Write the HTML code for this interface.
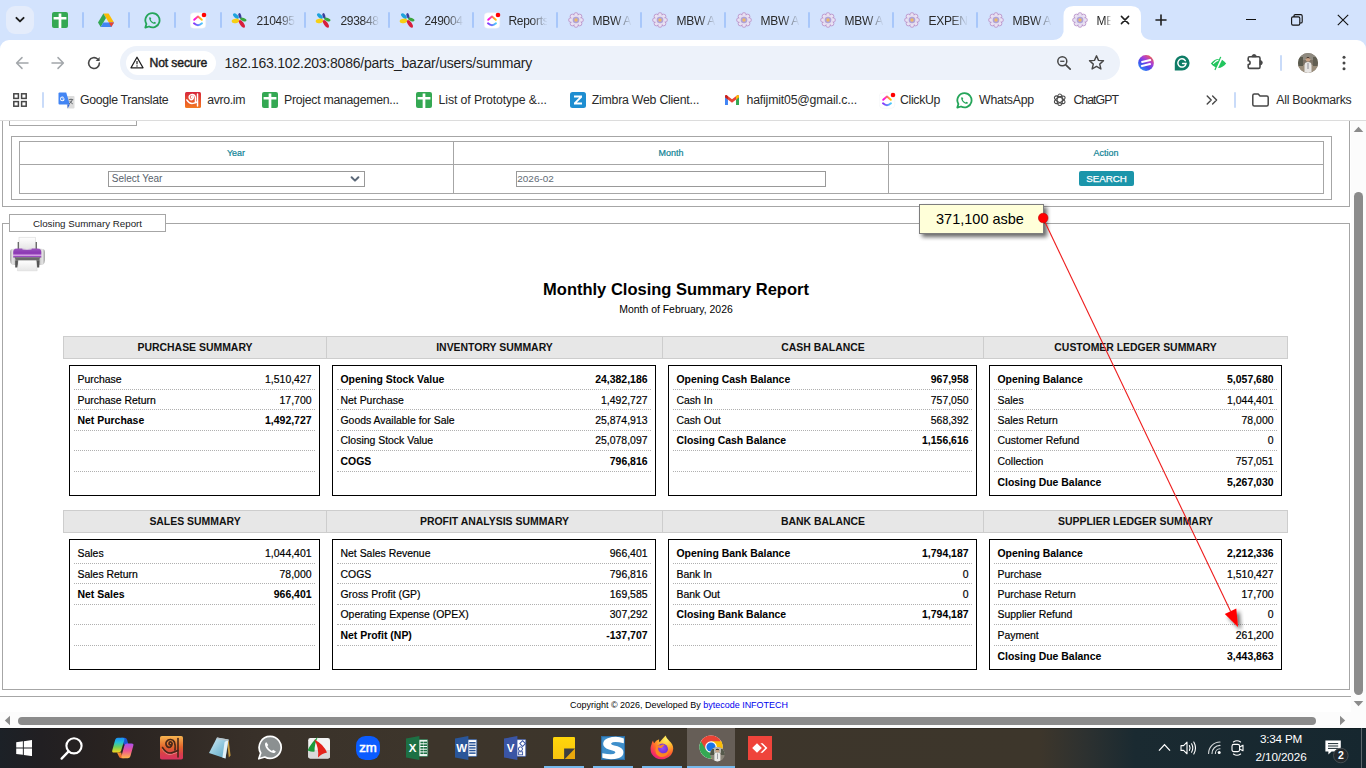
<!DOCTYPE html>
<html lang="en"><head><meta charset="utf-8"><title>Monthly Closing Summary Report</title>
<style>*{box-sizing:border-box;margin:0;padding:0}
html,body{width:1366px;height:768px;overflow:hidden;background:#fff;font-family:"Liberation Sans",sans-serif;color:#000}
.abs{position:absolute}
.ln{position:absolute;background:#a6a6a6}
.lg{position:absolute;border:1px solid #a6a6a6;background:#fff;font-size:9.78px;text-align:center;color:#222;white-space:nowrap}
.teal{position:absolute;color:#0e8295;-webkit-text-stroke:0.2px #0e8295;font-size:8.95px;line-height:12px;width:100px;text-align:center;white-space:nowrap}
.hd{position:absolute;background:#e7e7e7;border:1px solid #cdcdcd;font-weight:bold;font-size:10.45px;text-align:center;color:#111;white-space:nowrap}
.box{position:absolute;border:1px solid #000;background:#fff}
.row{position:absolute;height:1px;border-top:1px dotted #b0b0b0}
.t{position:absolute;font-size:10.45px;line-height:14px;white-space:nowrap;color:#000;-webkit-text-stroke:0.18px #000}
.t.r{text-align:right}
.b{font-weight:bold}

.t.b{-webkit-text-stroke:0.05px #000}
</style></head>
<body>
<div id="page" class="abs" style="left:0;top:120px;width:1351px;height:592px;background:#fff;overflow:hidden">
<div class="ln" style="left:2px;top:0px;width:1px;height:87px"></div>
<div class="ln" style="left:1349px;top:0px;width:1px;height:87px"></div>
<div class="ln" style="left:2px;top:86px;width:1348px;height:1px"></div>
<div class="lg" style="left:9px;top:-12px;width:128px;height:18px"></div>
<div class="abs" style="left:11px;top:16px;width:1321px;height:64px;border:1px solid #a6a6a6"></div>
<div class="abs" style="left:19px;top:21px;width:1305px;height:53px;border:1px solid #a6a6a6"></div>
<div class="ln" style="left:19px;top:44px;width:1305px;height:1px"></div>
<div class="ln" style="left:453px;top:21px;width:1px;height:53px"></div>
<div class="ln" style="left:888px;top:21px;width:1px;height:53px"></div>
<div class="teal" style="left:186px;top:26.5px">Year</div>
<div class="teal" style="left:621px;top:26.5px">Month</div>
<div class="teal" style="left:1056px;top:26.5px">Action</div>
<div class="abs" style="left:108px;top:51px;width:257px;height:16px;border:1px solid #999;background:#fff;font-size:10px;line-height:13.5px;color:#59626c;padding-left:2.8px">Select Year</div>
<svg class="abs" style="left:350px;top:55px" width="10" height="8" viewBox="0 0 10 8"><path d="M1.6 2.2 L5 5.6 L8.4 2.2" fill="none" stroke="#5b6878" stroke-width="2" stroke-linecap="round" stroke-linejoin="round"/></svg>
<div class="abs" style="left:516px;top:51px;width:310px;height:16px;border:1px solid #999;background:#fff;font-size:9.95px;line-height:13.5px;color:#626b76;padding-left:0.3px">2026-02</div>
<div class="abs" style="left:1079px;top:51px;width:55px;height:15px;border-radius:2px;background:#1b95aa;color:#fff;font-size:9.75px;line-height:15px;text-align:center;letter-spacing:0;-webkit-text-stroke:0.25px #fff">SEARCH</div>
<div class="ln" style="left:2px;top:103px;width:1348px;height:1px"></div>
<div class="ln" style="left:2px;top:103px;width:1px;height:467px"></div>
<div class="ln" style="left:1349px;top:103px;width:1px;height:467px"></div>
<div class="ln" style="left:2px;top:569px;width:1348px;height:1px"></div>
<div class="lg" style="left:9px;top:94px;width:157px;height:18px;line-height:17.5px">Closing Summary Report</div>
<svg class="abs" style="left:4px;top:112px" width="48" height="44" viewBox="0 0 48 44">
<defs><linearGradient id="pg" x1="0" y1="0" x2="0" y2="1"><stop offset="0" stop-color="#9a55bd"/><stop offset="0.55" stop-color="#8a35b3"/><stop offset="0.78" stop-color="#d6a3e6"/><stop offset="0.9" stop-color="#9c4cc0"/><stop offset="1" stop-color="#7b3a9c"/></linearGradient>
<linearGradient id="pg2" x1="0" y1="0" x2="1" y2="0"><stop offset="0" stop-color="#a2a2a2"/><stop offset="0.45" stop-color="#e6e6e6"/><stop offset="1" stop-color="#bdbdbd"/></linearGradient><linearGradient id="pg4" x1="1" y1="0" x2="0" y2="0"><stop offset="0" stop-color="#a2a2a2"/><stop offset="0.45" stop-color="#e6e6e6"/><stop offset="1" stop-color="#bdbdbd"/></linearGradient>
<linearGradient id="pg3" x1="0" y1="0" x2="0" y2="1"><stop offset="0" stop-color="#ffffff"/><stop offset="1" stop-color="#e6e6e6"/></linearGradient>
<filter id="pb" x="-10%" y="-10%" width="120%" height="120%"><feGaussianBlur stdDeviation="0.35"/></filter></defs>
<g filter="url(#pb)">
<rect x="13.7" y="10" width="1.6" height="7" fill="#4a4a4a"/><rect x="31.2" y="10" width="1.6" height="7" fill="#4a4a4a"/>
<rect x="15" y="5.2" width="16.3" height="11.6" fill="url(#pg3)" stroke="#cfcfcf" stroke-width="0.5"/>
<path d="M6 20 Q6 16.8 10 16.8 H12 V33 H8.4 Q6 31.5 6 28 Z" fill="url(#pg2)"/>
<path d="M41 20 Q41 16.8 37 16.8 H35 V33 H38.6 Q41 31.5 41 28 Z" fill="url(#pg4)"/>
<path d="M9.2 20 Q9.2 16.4 13 16.4 H33.5 Q37.3 16.4 37.3 20 V25.4 H9.2 Z" fill="url(#pg)"/>
<ellipse cx="23" cy="16.8" rx="5" ry="0.9" fill="#e9e9e9"/>
<path d="M10.8 25.2 H36 L35.2 28.8 H11.8 Z" fill="#6b6b6b"/>
<path d="M11.2 28.6 H14.4 L13.6 35.6 H11.2 Z M35.6 28.6 H32.2 L33 35.6 H35.2 Z" fill="#555"/>
<path d="M14.4 28.6 H32.2 L33.2 38.8 H13.4 Z" fill="url(#pg3)" stroke="#d0d0d0" stroke-width="0.4"/>
</g></svg>
<div class="abs" style="left:376px;top:159px;width:600px;text-align:center;font-weight:bold;font-size:16.5px;line-height:20px;color:#000;white-space:nowrap">Monthly Closing Summary Report</div>
<div class="abs" style="left:376px;top:183.3px;width:600px;text-align:center;font-size:10.45px;line-height:14px;color:#000;white-space:nowrap">Month of February, 2026</div>
<div class="hd" style="left:63px;top:216px;width:264px;height:23px;line-height:21px">PURCHASE SUMMARY</div>
<div class="box" style="left:69px;top:245px;width:251px;height:131px"></div>
<div class="row" style="left:73.5px;top:269px;width:241px"></div>
<div class="t" style="left:77.5px;top:253.25px">Purchase</div>
<div class="t r" style="left:191.5px;top:253.25px;width:120px">1,510,427</div>
<div class="row" style="left:73.5px;top:289px;width:241px"></div>
<div class="t" style="left:77.5px;top:274.25px">Purchase Return</div>
<div class="t r" style="left:191.5px;top:274.25px;width:120px">17,700</div>
<div class="row" style="left:73.5px;top:310px;width:241px"></div>
<div class="t b" style="left:77.5px;top:294.25px">Net Purchase</div>
<div class="t r b" style="left:191.5px;top:294.25px;width:120px">1,492,727</div>
<div class="row" style="left:73.5px;top:330px;width:241px"></div>
<div class="row" style="left:73.5px;top:351px;width:241px"></div>
<div class="hd" style="left:326px;top:216px;width:337px;height:23px;line-height:21px">INVENTORY SUMMARY</div>
<div class="box" style="left:332px;top:245px;width:324px;height:131px"></div>
<div class="row" style="left:336.5px;top:269px;width:314px"></div>
<div class="t b" style="left:340.5px;top:253.25px">Opening Stock Value</div>
<div class="t r b" style="left:527.5px;top:253.25px;width:120px">24,382,186</div>
<div class="row" style="left:336.5px;top:289px;width:314px"></div>
<div class="t" style="left:340.5px;top:274.25px">Net Purchase</div>
<div class="t r" style="left:527.5px;top:274.25px;width:120px">1,492,727</div>
<div class="row" style="left:336.5px;top:310px;width:314px"></div>
<div class="t" style="left:340.5px;top:294.25px">Goods Available for Sale</div>
<div class="t r" style="left:527.5px;top:294.25px;width:120px">25,874,913</div>
<div class="row" style="left:336.5px;top:330px;width:314px"></div>
<div class="t" style="left:340.5px;top:314.25px">Closing Stock Value</div>
<div class="t r" style="left:527.5px;top:314.25px;width:120px">25,078,097</div>
<div class="row" style="left:336.5px;top:351px;width:314px"></div>
<div class="t b" style="left:340.5px;top:335.25px">COGS</div>
<div class="t r b" style="left:527.5px;top:335.25px;width:120px">796,816</div>
<div class="hd" style="left:662px;top:216px;width:322px;height:23px;line-height:21px">CASH BALANCE</div>
<div class="box" style="left:668px;top:245px;width:309px;height:131px"></div>
<div class="row" style="left:672.5px;top:269px;width:299px"></div>
<div class="t b" style="left:676.5px;top:253.25px">Opening Cash Balance</div>
<div class="t r b" style="left:848.5px;top:253.25px;width:120px">967,958</div>
<div class="row" style="left:672.5px;top:289px;width:299px"></div>
<div class="t" style="left:676.5px;top:274.25px">Cash In</div>
<div class="t r" style="left:848.5px;top:274.25px;width:120px">757,050</div>
<div class="row" style="left:672.5px;top:310px;width:299px"></div>
<div class="t" style="left:676.5px;top:294.25px">Cash Out</div>
<div class="t r" style="left:848.5px;top:294.25px;width:120px">568,392</div>
<div class="row" style="left:672.5px;top:330px;width:299px"></div>
<div class="t b" style="left:676.5px;top:314.25px">Closing Cash Balance</div>
<div class="t r b" style="left:848.5px;top:314.25px;width:120px">1,156,616</div>
<div class="row" style="left:672.5px;top:351px;width:299px"></div>
<div class="hd" style="left:983px;top:216px;width:305px;height:23px;line-height:21px">CUSTOMER LEDGER SUMMARY</div>
<div class="box" style="left:989px;top:245px;width:293px;height:131px"></div>
<div class="row" style="left:993.5px;top:269px;width:283px"></div>
<div class="t b" style="left:997.5px;top:253.25px">Opening Balance</div>
<div class="t r b" style="left:1153.5px;top:253.25px;width:120px">5,057,680</div>
<div class="row" style="left:993.5px;top:289px;width:283px"></div>
<div class="t" style="left:997.5px;top:274.25px">Sales</div>
<div class="t r" style="left:1153.5px;top:274.25px;width:120px">1,044,401</div>
<div class="row" style="left:993.5px;top:310px;width:283px"></div>
<div class="t" style="left:997.5px;top:294.25px">Sales Return</div>
<div class="t r" style="left:1153.5px;top:294.25px;width:120px">78,000</div>
<div class="row" style="left:993.5px;top:330px;width:283px"></div>
<div class="t" style="left:997.5px;top:314.25px">Customer Refund</div>
<div class="t r" style="left:1153.5px;top:314.25px;width:120px">0</div>
<div class="row" style="left:993.5px;top:351px;width:283px"></div>
<div class="t" style="left:997.5px;top:335.25px">Collection</div>
<div class="t r" style="left:1153.5px;top:335.25px;width:120px">757,051</div>
<div class="t b" style="left:997.5px;top:356.25px">Closing Due Balance</div>
<div class="t r b" style="left:1153.5px;top:356.25px;width:120px">5,267,030</div>
<div class="hd" style="left:63px;top:390px;width:264px;height:23px;line-height:21px">SALES SUMMARY</div>
<div class="box" style="left:69px;top:419px;width:251px;height:131px"></div>
<div class="row" style="left:73.5px;top:443px;width:241px"></div>
<div class="t" style="left:77.5px;top:427.25px">Sales</div>
<div class="t r" style="left:191.5px;top:427.25px;width:120px">1,044,401</div>
<div class="row" style="left:73.5px;top:463px;width:241px"></div>
<div class="t" style="left:77.5px;top:448.25px">Sales Return</div>
<div class="t r" style="left:191.5px;top:448.25px;width:120px">78,000</div>
<div class="row" style="left:73.5px;top:484px;width:241px"></div>
<div class="t b" style="left:77.5px;top:468.25px">Net Sales</div>
<div class="t r b" style="left:191.5px;top:468.25px;width:120px">966,401</div>
<div class="row" style="left:73.5px;top:504px;width:241px"></div>
<div class="row" style="left:73.5px;top:525px;width:241px"></div>
<div class="hd" style="left:326px;top:390px;width:337px;height:23px;line-height:21px">PROFIT ANALYSIS SUMMARY</div>
<div class="box" style="left:332px;top:419px;width:324px;height:131px"></div>
<div class="row" style="left:336.5px;top:443px;width:314px"></div>
<div class="t" style="left:340.5px;top:427.25px">Net Sales Revenue</div>
<div class="t r" style="left:527.5px;top:427.25px;width:120px">966,401</div>
<div class="row" style="left:336.5px;top:463px;width:314px"></div>
<div class="t" style="left:340.5px;top:448.25px">COGS</div>
<div class="t r" style="left:527.5px;top:448.25px;width:120px">796,816</div>
<div class="row" style="left:336.5px;top:484px;width:314px"></div>
<div class="t" style="left:340.5px;top:468.25px">Gross Profit (GP)</div>
<div class="t r" style="left:527.5px;top:468.25px;width:120px">169,585</div>
<div class="row" style="left:336.5px;top:504px;width:314px"></div>
<div class="t" style="left:340.5px;top:488.25px">Operating Expense (OPEX)</div>
<div class="t r" style="left:527.5px;top:488.25px;width:120px">307,292</div>
<div class="row" style="left:336.5px;top:525px;width:314px"></div>
<div class="t b" style="left:340.5px;top:509.25px">Net Profit (NP)</div>
<div class="t r b" style="left:527.5px;top:509.25px;width:120px">-137,707</div>
<div class="hd" style="left:662px;top:390px;width:322px;height:23px;line-height:21px">BANK BALANCE</div>
<div class="box" style="left:668px;top:419px;width:309px;height:131px"></div>
<div class="row" style="left:672.5px;top:443px;width:299px"></div>
<div class="t b" style="left:676.5px;top:427.25px">Opening Bank Balance</div>
<div class="t r b" style="left:848.5px;top:427.25px;width:120px">1,794,187</div>
<div class="row" style="left:672.5px;top:463px;width:299px"></div>
<div class="t" style="left:676.5px;top:448.25px">Bank In</div>
<div class="t r" style="left:848.5px;top:448.25px;width:120px">0</div>
<div class="row" style="left:672.5px;top:484px;width:299px"></div>
<div class="t" style="left:676.5px;top:468.25px">Bank Out</div>
<div class="t r" style="left:848.5px;top:468.25px;width:120px">0</div>
<div class="row" style="left:672.5px;top:504px;width:299px"></div>
<div class="t b" style="left:676.5px;top:488.25px">Closing Bank Balance</div>
<div class="t r b" style="left:848.5px;top:488.25px;width:120px">1,794,187</div>
<div class="row" style="left:672.5px;top:525px;width:299px"></div>
<div class="hd" style="left:983px;top:390px;width:305px;height:23px;line-height:21px">SUPPLIER LEDGER SUMMARY</div>
<div class="box" style="left:989px;top:419px;width:293px;height:131px"></div>
<div class="row" style="left:993.5px;top:443px;width:283px"></div>
<div class="t b" style="left:997.5px;top:427.25px">Opening Balance</div>
<div class="t r b" style="left:1153.5px;top:427.25px;width:120px">2,212,336</div>
<div class="row" style="left:993.5px;top:463px;width:283px"></div>
<div class="t" style="left:997.5px;top:448.25px">Purchase</div>
<div class="t r" style="left:1153.5px;top:448.25px;width:120px">1,510,427</div>
<div class="row" style="left:993.5px;top:484px;width:283px"></div>
<div class="t" style="left:997.5px;top:468.25px">Purchase Return</div>
<div class="t r" style="left:1153.5px;top:468.25px;width:120px">17,700</div>
<div class="row" style="left:993.5px;top:504px;width:283px"></div>
<div class="t" style="left:997.5px;top:488.25px">Supplier Refund</div>
<div class="t r" style="left:1153.5px;top:488.25px;width:120px">0</div>
<div class="row" style="left:993.5px;top:525px;width:283px"></div>
<div class="t" style="left:997.5px;top:509.25px">Payment</div>
<div class="t r" style="left:1153.5px;top:509.25px;width:120px">261,200</div>
<div class="t b" style="left:997.5px;top:530.25px">Closing Due Balance</div>
<div class="t r b" style="left:1153.5px;top:530.25px;width:120px">3,443,863</div>
<div class="ln" style="left:0px;top:576px;width:1351px;height:1px"></div>
<div class="abs" style="left:379px;top:579px;width:600px;text-align:center;font-size:8.97px;line-height:12px;color:#000;white-space:nowrap">Copyright © 2026, Developed By <span style="color:#0000ee">bytecode INFOTECH</span></div>
</div>
<div class="abs" style="left:1351px;top:120px;width:15px;height:592px;background:#fcfcfc"></div>
<svg class="abs" style="left:1353px;top:126px" width="11" height="7" viewBox="0 0 11 7"><path d="M5.5 0.8 L10.3 6 H0.7 Z" fill="#8b8b8b"/></svg>
<svg class="abs" style="left:1353px;top:700px" width="11" height="7" viewBox="0 0 11 7"><path d="M5.5 6.2 L10.3 1 H0.7 Z" fill="#8b8b8b"/></svg>
<div class="abs" style="left:1354px;top:192px;width:9px;height:503px;border-radius:4.5px;background:#8b8b8b"></div>
<div class="abs" style="left:0;top:712px;width:1366px;height:16px;background:#fcfcfc"></div>
<svg class="abs" style="left:4px;top:715px" width="7" height="11" viewBox="0 0 7 11"><path d="M0.8 5.5 L6 0.7 V10.3 Z" fill="#8b8b8b"/></svg>
<svg class="abs" style="left:1339px;top:715px" width="7" height="11" viewBox="0 0 7 11"><path d="M6.2 5.5 L1 0.7 V10.3 Z" fill="#8b8b8b"/></svg>
<div class="abs" style="left:18px;top:716.5px;width:1298px;height:8.7px;border-radius:4.35px;background:#8b8b8b"></div>
<div id="tabstrip" class="abs" style="left:0;top:0;width:1366px;height:52px;background:#d3e3fd"></div>
<div class="abs" style="left:6px;top:6px;width:28px;height:28px;border-radius:9px;background:#e4ecfb"></div>
<svg class="abs" style="left:13px;top:14px" width="14" height="12" viewBox="0 0 14 12"><path d="M3.4 3.8 L7 7.4 L10.6 3.8" fill="none" stroke="#1f1f1f" stroke-width="1.9" stroke-linecap="round" stroke-linejoin="round"/></svg>
<svg class="abs" style="left:52px;top:12px" width="16" height="16" viewBox="0 0 16 16"><rect width="16" height="16" rx="2" fill="#34a853"/><path d="M1.6 4.9 H14.4 V7.6 H9.35 V16 H6.65 V7.6 H1.6 Z M6.65 1.6 H9.35 V4.9 H6.65 Z" fill="#fff"/></svg>
<svg class="abs" style="left:98px;top:12px" width="16" height="16" viewBox="0 0 16 16"><path d="M5.4 1.4 H10.6 L16 10.6 H10.8 Z" fill="#fbbc04"/><path d="M5.4 1.4 L8 5.9 L2.7 15 L0 10.6 Z" fill="#34a853"/><path d="M5.3 10.6 H16 L13.3 15 H2.7 Z" fill="#4285f4"/><path d="M10.8 10.6 H16 L13.3 15 Z" fill="#ea4335"/></svg>
<svg class="abs" style="left:143.5px;top:11.5px" width="17" height="17" viewBox="0 0 17 17"><path d="M8.6 1.2 A7.1 7.1 0 1 1 5 14.5 L1.3 15.6 L2.4 12 A7.1 7.1 0 0 1 8.6 1.2 Z" fill="none" stroke="#25a55a" stroke-width="1.8" stroke-linejoin="round"/><path d="M6.1 4.9 C5.6 4.9 5.2 5.6 5.2 6.4 C5.4 8.9 8 11.5 10.5 11.8 C11.4 11.8 12.1 11.3 12.1 10.8 L10.4 9.8 L9.6 10.5 C8.5 10.1 7 8.6 6.7 7.5 L7.3 6.7 Z" fill="#25a55a"/></svg>
<svg class="abs" style="left:190px;top:11.5px" width="17" height="17" viewBox="0 0 17 17"><defs><linearGradient id="cu0" x1="0" y1="0" x2="1" y2="0"><stop offset="0" stop-color="#8930fd"/><stop offset="1" stop-color="#49ccf9"/></linearGradient><linearGradient id="cv0" x1="0" y1="0" x2="1" y2="0"><stop offset="0" stop-color="#ff02f0"/><stop offset="1" stop-color="#ffc800"/></linearGradient></defs><rect x="0.25" y="0.75" width="15.5" height="15.5" rx="3.5" fill="#fff" stroke="#eef0f3" stroke-width="0.5"/><path d="M4 11.3 Q8 15 12 11.3" fill="none" stroke="url(#cu0)" stroke-width="1.9" stroke-linecap="round"/><path d="M4.2 7.8 L8 4.5 L11.8 7.8" fill="none" stroke="url(#cv0)" stroke-width="1.9" stroke-linecap="round" stroke-linejoin="round"/><circle cx="14" cy="3" r="2.3" fill="#ff0000"/></svg>
<div class="abs" style="left:81.8px;top:12px;width:2px;height:16px;background:#a8c7fa;border-radius:1px"></div>
<div class="abs" style="left:127.8px;top:12px;width:2px;height:16px;background:#a8c7fa;border-radius:1px"></div>
<div class="abs" style="left:174px;top:12px;width:2px;height:16px;background:#a8c7fa;border-radius:1px"></div>
<div class="abs" style="left:219.8px;top:12px;width:2px;height:16px;background:#a8c7fa;border-radius:1px"></div>
<div class="abs" style="left:304px;top:12px;width:2px;height:16px;background:#a8c7fa;border-radius:1px"></div>
<div class="abs" style="left:388px;top:12px;width:2px;height:16px;background:#a8c7fa;border-radius:1px"></div>
<div class="abs" style="left:472px;top:12px;width:2px;height:16px;background:#a8c7fa;border-radius:1px"></div>
<div class="abs" style="left:556px;top:12px;width:2px;height:16px;background:#a8c7fa;border-radius:1px"></div>
<div class="abs" style="left:640px;top:12px;width:2px;height:16px;background:#a8c7fa;border-radius:1px"></div>
<div class="abs" style="left:724px;top:12px;width:2px;height:16px;background:#a8c7fa;border-radius:1px"></div>
<div class="abs" style="left:808px;top:12px;width:2px;height:16px;background:#a8c7fa;border-radius:1px"></div>
<div class="abs" style="left:892px;top:12px;width:2px;height:16px;background:#a8c7fa;border-radius:1px"></div>
<div class="abs" style="left:976px;top:12px;width:2px;height:16px;background:#a8c7fa;border-radius:1px"></div>
<svg class="abs" style="left:231px;top:11.5px" width="17" height="17" viewBox="0 0 17 17"><ellipse cx="8.9" cy="3.9" rx="2.9" ry="1.4" transform="rotate(72 8.9 3.9)" fill="#3b3f9a"/><ellipse cx="4.9" cy="4.1" rx="3.5" ry="1.8" transform="rotate(42 4.9 4.1)" fill="#1fa3dc"/><ellipse cx="12.3" cy="7.5" rx="3.3" ry="1.6" transform="rotate(22 12.3 7.5)" fill="#3aa63c"/><ellipse cx="4.5" cy="8.9" rx="3.9" ry="2.3" transform="rotate(-10 4.5 8.9)" fill="#f6d015"/><ellipse cx="10.9" cy="11.9" rx="4.5" ry="1.9" transform="rotate(56 10.9 11.9)" fill="#d81f3c"/></svg>
<div style="position:absolute;top:13px;font-size:12px;line-height:16px;color:#2a2a2a;letter-spacing:-0.3px;white-space:nowrap;overflow:hidden;width:38px;-webkit-mask-image:linear-gradient(90deg,#000 58%,rgba(0,0,0,0.08) 98%);mask-image:linear-gradient(90deg,#000 58%,rgba(0,0,0,0.08) 98%);left:256.5px">210495</div>
<svg class="abs" style="left:315px;top:11.5px" width="17" height="17" viewBox="0 0 17 17"><ellipse cx="8.9" cy="3.9" rx="2.9" ry="1.4" transform="rotate(72 8.9 3.9)" fill="#3b3f9a"/><ellipse cx="4.9" cy="4.1" rx="3.5" ry="1.8" transform="rotate(42 4.9 4.1)" fill="#1fa3dc"/><ellipse cx="12.3" cy="7.5" rx="3.3" ry="1.6" transform="rotate(22 12.3 7.5)" fill="#3aa63c"/><ellipse cx="4.5" cy="8.9" rx="3.9" ry="2.3" transform="rotate(-10 4.5 8.9)" fill="#f6d015"/><ellipse cx="10.9" cy="11.9" rx="4.5" ry="1.9" transform="rotate(56 10.9 11.9)" fill="#d81f3c"/></svg>
<div style="position:absolute;top:13px;font-size:12px;line-height:16px;color:#2a2a2a;letter-spacing:-0.3px;white-space:nowrap;overflow:hidden;width:38px;-webkit-mask-image:linear-gradient(90deg,#000 58%,rgba(0,0,0,0.08) 98%);mask-image:linear-gradient(90deg,#000 58%,rgba(0,0,0,0.08) 98%);left:340.5px">293848</div>
<svg class="abs" style="left:399px;top:11.5px" width="17" height="17" viewBox="0 0 17 17"><ellipse cx="8.9" cy="3.9" rx="2.9" ry="1.4" transform="rotate(72 8.9 3.9)" fill="#3b3f9a"/><ellipse cx="4.9" cy="4.1" rx="3.5" ry="1.8" transform="rotate(42 4.9 4.1)" fill="#1fa3dc"/><ellipse cx="12.3" cy="7.5" rx="3.3" ry="1.6" transform="rotate(22 12.3 7.5)" fill="#3aa63c"/><ellipse cx="4.5" cy="8.9" rx="3.9" ry="2.3" transform="rotate(-10 4.5 8.9)" fill="#f6d015"/><ellipse cx="10.9" cy="11.9" rx="4.5" ry="1.9" transform="rotate(56 10.9 11.9)" fill="#d81f3c"/></svg>
<div style="position:absolute;top:13px;font-size:12px;line-height:16px;color:#2a2a2a;letter-spacing:-0.3px;white-space:nowrap;overflow:hidden;width:38px;-webkit-mask-image:linear-gradient(90deg,#000 58%,rgba(0,0,0,0.08) 98%);mask-image:linear-gradient(90deg,#000 58%,rgba(0,0,0,0.08) 98%);left:424.5px">249004</div>
<svg class="abs" style="left:484px;top:11.5px" width="17" height="17" viewBox="0 0 17 17"><defs><linearGradient id="cu1" x1="0" y1="0" x2="1" y2="0"><stop offset="0" stop-color="#8930fd"/><stop offset="1" stop-color="#49ccf9"/></linearGradient><linearGradient id="cv1" x1="0" y1="0" x2="1" y2="0"><stop offset="0" stop-color="#ff02f0"/><stop offset="1" stop-color="#ffc800"/></linearGradient></defs><rect x="0.25" y="0.75" width="15.5" height="15.5" rx="3.5" fill="#fff" stroke="#eef0f3" stroke-width="0.5"/><path d="M4 11.3 Q8 15 12 11.3" fill="none" stroke="url(#cu1)" stroke-width="1.9" stroke-linecap="round"/><path d="M4.2 7.8 L8 4.5 L11.8 7.8" fill="none" stroke="url(#cv1)" stroke-width="1.9" stroke-linecap="round" stroke-linejoin="round"/><circle cx="14" cy="3" r="2.3" fill="#ff0000"/></svg>
<div style="position:absolute;top:13px;font-size:12px;line-height:16px;color:#2a2a2a;letter-spacing:-0.3px;white-space:nowrap;overflow:hidden;width:38px;-webkit-mask-image:linear-gradient(90deg,#000 58%,rgba(0,0,0,0.08) 98%);mask-image:linear-gradient(90deg,#000 58%,rgba(0,0,0,0.08) 98%);left:508.5px">Reports</div>
<svg class="abs" style="left:567.7px;top:12px" width="16" height="16" viewBox="0 0 16 16"><circle cx="8.00" cy="2.90" r="2.25" fill="#e9e2f3" stroke="#b891c9" stroke-width="0.85"/><circle cx="11.61" cy="4.39" r="2.25" fill="#e9e2f3" stroke="#b891c9" stroke-width="0.85"/><circle cx="13.10" cy="8.00" r="2.25" fill="#e9e2f3" stroke="#b891c9" stroke-width="0.85"/><circle cx="11.61" cy="11.61" r="2.25" fill="#e9e2f3" stroke="#b891c9" stroke-width="0.85"/><circle cx="8.00" cy="13.10" r="2.25" fill="#e9e2f3" stroke="#b891c9" stroke-width="0.85"/><circle cx="4.39" cy="11.61" r="2.25" fill="#e9e2f3" stroke="#b891c9" stroke-width="0.85"/><circle cx="2.90" cy="8.00" r="2.25" fill="#e9e2f3" stroke="#b891c9" stroke-width="0.85"/><circle cx="4.39" cy="4.39" r="2.25" fill="#e9e2f3" stroke="#b891c9" stroke-width="0.85"/><circle cx="8" cy="8" r="5" fill="#e6def1"/><circle cx="8" cy="8" r="3.3" fill="#aea3d8"/><circle cx="8" cy="8" r="1.7" fill="#efb968"/></svg>
<div style="position:absolute;top:13px;font-size:12px;line-height:16px;color:#2a2a2a;letter-spacing:-0.3px;white-space:nowrap;overflow:hidden;width:38px;-webkit-mask-image:linear-gradient(90deg,#000 58%,rgba(0,0,0,0.08) 98%);mask-image:linear-gradient(90deg,#000 58%,rgba(0,0,0,0.08) 98%);left:592.5px">MBW A</div>
<svg class="abs" style="left:651.7px;top:12px" width="16" height="16" viewBox="0 0 16 16"><circle cx="8.00" cy="2.90" r="2.25" fill="#e9e2f3" stroke="#b891c9" stroke-width="0.85"/><circle cx="11.61" cy="4.39" r="2.25" fill="#e9e2f3" stroke="#b891c9" stroke-width="0.85"/><circle cx="13.10" cy="8.00" r="2.25" fill="#e9e2f3" stroke="#b891c9" stroke-width="0.85"/><circle cx="11.61" cy="11.61" r="2.25" fill="#e9e2f3" stroke="#b891c9" stroke-width="0.85"/><circle cx="8.00" cy="13.10" r="2.25" fill="#e9e2f3" stroke="#b891c9" stroke-width="0.85"/><circle cx="4.39" cy="11.61" r="2.25" fill="#e9e2f3" stroke="#b891c9" stroke-width="0.85"/><circle cx="2.90" cy="8.00" r="2.25" fill="#e9e2f3" stroke="#b891c9" stroke-width="0.85"/><circle cx="4.39" cy="4.39" r="2.25" fill="#e9e2f3" stroke="#b891c9" stroke-width="0.85"/><circle cx="8" cy="8" r="5" fill="#e6def1"/><circle cx="8" cy="8" r="3.3" fill="#aea3d8"/><circle cx="8" cy="8" r="1.7" fill="#efb968"/></svg>
<div style="position:absolute;top:13px;font-size:12px;line-height:16px;color:#2a2a2a;letter-spacing:-0.3px;white-space:nowrap;overflow:hidden;width:38px;-webkit-mask-image:linear-gradient(90deg,#000 58%,rgba(0,0,0,0.08) 98%);mask-image:linear-gradient(90deg,#000 58%,rgba(0,0,0,0.08) 98%);left:676.5px">MBW A</div>
<svg class="abs" style="left:735.7px;top:12px" width="16" height="16" viewBox="0 0 16 16"><circle cx="8.00" cy="2.90" r="2.25" fill="#e9e2f3" stroke="#b891c9" stroke-width="0.85"/><circle cx="11.61" cy="4.39" r="2.25" fill="#e9e2f3" stroke="#b891c9" stroke-width="0.85"/><circle cx="13.10" cy="8.00" r="2.25" fill="#e9e2f3" stroke="#b891c9" stroke-width="0.85"/><circle cx="11.61" cy="11.61" r="2.25" fill="#e9e2f3" stroke="#b891c9" stroke-width="0.85"/><circle cx="8.00" cy="13.10" r="2.25" fill="#e9e2f3" stroke="#b891c9" stroke-width="0.85"/><circle cx="4.39" cy="11.61" r="2.25" fill="#e9e2f3" stroke="#b891c9" stroke-width="0.85"/><circle cx="2.90" cy="8.00" r="2.25" fill="#e9e2f3" stroke="#b891c9" stroke-width="0.85"/><circle cx="4.39" cy="4.39" r="2.25" fill="#e9e2f3" stroke="#b891c9" stroke-width="0.85"/><circle cx="8" cy="8" r="5" fill="#e6def1"/><circle cx="8" cy="8" r="3.3" fill="#aea3d8"/><circle cx="8" cy="8" r="1.7" fill="#efb968"/></svg>
<div style="position:absolute;top:13px;font-size:12px;line-height:16px;color:#2a2a2a;letter-spacing:-0.3px;white-space:nowrap;overflow:hidden;width:38px;-webkit-mask-image:linear-gradient(90deg,#000 58%,rgba(0,0,0,0.08) 98%);mask-image:linear-gradient(90deg,#000 58%,rgba(0,0,0,0.08) 98%);left:760.5px">MBW A</div>
<svg class="abs" style="left:819.7px;top:12px" width="16" height="16" viewBox="0 0 16 16"><circle cx="8.00" cy="2.90" r="2.25" fill="#e9e2f3" stroke="#b891c9" stroke-width="0.85"/><circle cx="11.61" cy="4.39" r="2.25" fill="#e9e2f3" stroke="#b891c9" stroke-width="0.85"/><circle cx="13.10" cy="8.00" r="2.25" fill="#e9e2f3" stroke="#b891c9" stroke-width="0.85"/><circle cx="11.61" cy="11.61" r="2.25" fill="#e9e2f3" stroke="#b891c9" stroke-width="0.85"/><circle cx="8.00" cy="13.10" r="2.25" fill="#e9e2f3" stroke="#b891c9" stroke-width="0.85"/><circle cx="4.39" cy="11.61" r="2.25" fill="#e9e2f3" stroke="#b891c9" stroke-width="0.85"/><circle cx="2.90" cy="8.00" r="2.25" fill="#e9e2f3" stroke="#b891c9" stroke-width="0.85"/><circle cx="4.39" cy="4.39" r="2.25" fill="#e9e2f3" stroke="#b891c9" stroke-width="0.85"/><circle cx="8" cy="8" r="5" fill="#e6def1"/><circle cx="8" cy="8" r="3.3" fill="#aea3d8"/><circle cx="8" cy="8" r="1.7" fill="#efb968"/></svg>
<div style="position:absolute;top:13px;font-size:12px;line-height:16px;color:#2a2a2a;letter-spacing:-0.3px;white-space:nowrap;overflow:hidden;width:38px;-webkit-mask-image:linear-gradient(90deg,#000 58%,rgba(0,0,0,0.08) 98%);mask-image:linear-gradient(90deg,#000 58%,rgba(0,0,0,0.08) 98%);left:844.5px">MBW A</div>
<svg class="abs" style="left:903.7px;top:12px" width="16" height="16" viewBox="0 0 16 16"><circle cx="8.00" cy="2.90" r="2.25" fill="#e9e2f3" stroke="#b891c9" stroke-width="0.85"/><circle cx="11.61" cy="4.39" r="2.25" fill="#e9e2f3" stroke="#b891c9" stroke-width="0.85"/><circle cx="13.10" cy="8.00" r="2.25" fill="#e9e2f3" stroke="#b891c9" stroke-width="0.85"/><circle cx="11.61" cy="11.61" r="2.25" fill="#e9e2f3" stroke="#b891c9" stroke-width="0.85"/><circle cx="8.00" cy="13.10" r="2.25" fill="#e9e2f3" stroke="#b891c9" stroke-width="0.85"/><circle cx="4.39" cy="11.61" r="2.25" fill="#e9e2f3" stroke="#b891c9" stroke-width="0.85"/><circle cx="2.90" cy="8.00" r="2.25" fill="#e9e2f3" stroke="#b891c9" stroke-width="0.85"/><circle cx="4.39" cy="4.39" r="2.25" fill="#e9e2f3" stroke="#b891c9" stroke-width="0.85"/><circle cx="8" cy="8" r="5" fill="#e6def1"/><circle cx="8" cy="8" r="3.3" fill="#aea3d8"/><circle cx="8" cy="8" r="1.7" fill="#efb968"/></svg>
<div style="position:absolute;top:13px;font-size:12px;line-height:16px;color:#2a2a2a;letter-spacing:-0.3px;white-space:nowrap;overflow:hidden;width:38px;-webkit-mask-image:linear-gradient(90deg,#000 58%,rgba(0,0,0,0.08) 98%);mask-image:linear-gradient(90deg,#000 58%,rgba(0,0,0,0.08) 98%);left:928.5px">EXPENS</div>
<svg class="abs" style="left:987.7px;top:12px" width="16" height="16" viewBox="0 0 16 16"><circle cx="8.00" cy="2.90" r="2.25" fill="#e9e2f3" stroke="#b891c9" stroke-width="0.85"/><circle cx="11.61" cy="4.39" r="2.25" fill="#e9e2f3" stroke="#b891c9" stroke-width="0.85"/><circle cx="13.10" cy="8.00" r="2.25" fill="#e9e2f3" stroke="#b891c9" stroke-width="0.85"/><circle cx="11.61" cy="11.61" r="2.25" fill="#e9e2f3" stroke="#b891c9" stroke-width="0.85"/><circle cx="8.00" cy="13.10" r="2.25" fill="#e9e2f3" stroke="#b891c9" stroke-width="0.85"/><circle cx="4.39" cy="11.61" r="2.25" fill="#e9e2f3" stroke="#b891c9" stroke-width="0.85"/><circle cx="2.90" cy="8.00" r="2.25" fill="#e9e2f3" stroke="#b891c9" stroke-width="0.85"/><circle cx="4.39" cy="4.39" r="2.25" fill="#e9e2f3" stroke="#b891c9" stroke-width="0.85"/><circle cx="8" cy="8" r="5" fill="#e6def1"/><circle cx="8" cy="8" r="3.3" fill="#aea3d8"/><circle cx="8" cy="8" r="1.7" fill="#efb968"/></svg>
<div style="position:absolute;top:13px;font-size:12px;line-height:16px;color:#2a2a2a;letter-spacing:-0.3px;white-space:nowrap;overflow:hidden;width:38px;-webkit-mask-image:linear-gradient(90deg,#000 58%,rgba(0,0,0,0.08) 98%);mask-image:linear-gradient(90deg,#000 58%,rgba(0,0,0,0.08) 98%);left:1012.5px">MBW A</div>
<svg class="abs" style="left:1053px;top:6px" width="99" height="34" viewBox="0 0 99 34"><path d="M0 34 Q8 34 10.5 26 V10 Q10.5 0 20.5 0 H78 Q88 0 88 10 V26 Q90.5 34 99 34 Z" fill="#fff"/></svg>
<svg class="abs" style="left:1072px;top:12px" width="16" height="16" viewBox="0 0 16 16"><circle cx="8.00" cy="2.90" r="2.25" fill="#e9e2f3" stroke="#b891c9" stroke-width="0.85"/><circle cx="11.61" cy="4.39" r="2.25" fill="#e9e2f3" stroke="#b891c9" stroke-width="0.85"/><circle cx="13.10" cy="8.00" r="2.25" fill="#e9e2f3" stroke="#b891c9" stroke-width="0.85"/><circle cx="11.61" cy="11.61" r="2.25" fill="#e9e2f3" stroke="#b891c9" stroke-width="0.85"/><circle cx="8.00" cy="13.10" r="2.25" fill="#e9e2f3" stroke="#b891c9" stroke-width="0.85"/><circle cx="4.39" cy="11.61" r="2.25" fill="#e9e2f3" stroke="#b891c9" stroke-width="0.85"/><circle cx="2.90" cy="8.00" r="2.25" fill="#e9e2f3" stroke="#b891c9" stroke-width="0.85"/><circle cx="4.39" cy="4.39" r="2.25" fill="#e9e2f3" stroke="#b891c9" stroke-width="0.85"/><circle cx="8" cy="8" r="5" fill="#e6def1"/><circle cx="8" cy="8" r="3.3" fill="#aea3d8"/><circle cx="8" cy="8" r="1.7" fill="#efb968"/></svg>
<div style="position:absolute;top:13px;left:1096.5px;font-size:12px;line-height:16px;color:#2a2a2a;letter-spacing:-0.3px;white-space:nowrap;overflow:hidden;width:14px;-webkit-mask-image:linear-gradient(90deg,#000 55%,rgba(0,0,0,0.05) 100%);mask-image:linear-gradient(90deg,#000 55%,rgba(0,0,0,0.05) 100%)">MBW</div>
<svg class="abs" style="left:1120px;top:15px" width="10" height="10" viewBox="0 0 10 10"><path d="M1.4 1.4 L8.6 8.6 M8.6 1.4 L1.4 8.6" stroke="#1f1f1f" stroke-width="1.5" stroke-linecap="round"/></svg>
<svg class="abs" style="left:1155px;top:14px" width="12" height="12" viewBox="0 0 12 12"><path d="M6 1 V11 M1 6 H11" stroke="#1f1f1f" stroke-width="1.6" stroke-linecap="round"/></svg>
<div class="abs" style="left:1246px;top:19px;width:10px;height:1px;background:#111"></div>
<svg class="abs" style="left:1291px;top:14px" width="12" height="12" viewBox="0 0 12 12"><rect x="0.6" y="2.9" width="8.2" height="8.2" rx="1.3" fill="none" stroke="#111" stroke-width="1.1"/><path d="M3 2.9 V1.9 Q3 0.6 4.3 0.6 H9.9 Q11.2 0.6 11.2 1.9 V7.7 Q11.2 9 9.9 9 H8.8" fill="none" stroke="#111" stroke-width="1.1"/></svg>
<svg class="abs" style="left:1337px;top:14px" width="12" height="12" viewBox="0 0 12 12"><path d="M0.8 0.8 L11.2 11.2 M11.2 0.8 L0.8 11.2" stroke="#111" stroke-width="1.1"/></svg>
<div class="abs" style="left:0;top:40px;width:1366px;height:45px;background:#fff;border-radius:9px 9px 0 0"></div>
<div class="abs" style="left:0;top:84px;width:1366px;height:36px;background:#fff"></div>
<div class="abs" style="left:0;top:119.5px;width:1366px;height:1px;background:#dcdcdc"></div>
<svg class="abs" style="left:15px;top:56px" width="14" height="14" viewBox="0 0 14 14"><path d="M13 7 H2 M7 1.6 L1.6 7 L7 12.4" fill="none" stroke="#a3a7ab" stroke-width="1.5" stroke-linecap="round" stroke-linejoin="round"/></svg>
<svg class="abs" style="left:51px;top:56px" width="14" height="14" viewBox="0 0 14 14"><path d="M1 7 H12 M7 1.6 L12.4 7 L7 12.4" fill="none" stroke="#a3a7ab" stroke-width="1.5" stroke-linecap="round" stroke-linejoin="round"/></svg>
<svg class="abs" style="left:86px;top:55px" width="16" height="16" viewBox="0 0 16 16"><path d="M13.4 8 A5.4 5.4 0 1 1 11.6 4" fill="none" stroke="#474747" stroke-width="1.6" stroke-linecap="round"/><path d="M13.6 2 V6 H9.6 Z" fill="#474747"/></svg>
<div class="abs" style="left:120px;top:46px;width:1000px;height:34px;border-radius:17px;background:#edf2fa"></div>
<div class="abs" style="left:125.5px;top:51px;width:90px;height:24px;border-radius:12px;background:#fff"></div>
<svg class="abs" style="left:130px;top:56px" width="14" height="13" viewBox="0 0 14 13"><path d="M7 1.3 L13 11.8 H1 Z" fill="none" stroke="#1f1f1f" stroke-width="1.3" stroke-linejoin="round"/><path d="M7 5 V8.3" stroke="#1f1f1f" stroke-width="1.2"/><circle cx="7" cy="10" r="0.75" fill="#1f1f1f"/></svg>
<div class="abs" style="left:149.5px;top:55px;font-size:12.2px;line-height:16px;-webkit-text-stroke:0.45px #1f1f1f;color:#1f1f1f;white-space:nowrap;letter-spacing:-0.139px">Not secure</div>
<div class="abs" style="left:224.5px;top:54px;font-size:14px;line-height:18px;color:#1f1f1f;white-space:nowrap;letter-spacing:-0.218px">182.163.102.203:8086/parts_bazar/users/summary</div>
<svg class="abs" style="left:1056px;top:55px" width="16" height="16" viewBox="0 0 16 16"><circle cx="6.3" cy="6.3" r="4.5" fill="none" stroke="#474747" stroke-width="1.5"/><path d="M9.8 9.8 L14.2 14.2" stroke="#474747" stroke-width="1.7" stroke-linecap="round"/><path d="M4.2 6.3 H8.4" stroke="#474747" stroke-width="1.3"/></svg>
<svg class="abs" style="left:1087.5px;top:54px" width="17" height="17" viewBox="0 0 17 17"><path d="M8.5 1.8 L10.5 6.4 L15.5 6.8 L11.7 10.1 L12.9 15 L8.5 12.4 L4.1 15 L5.3 10.1 L1.5 6.8 L6.5 6.4 Z" fill="none" stroke="#474747" stroke-width="1.4" stroke-linejoin="round"/></svg>
<svg class="abs" style="left:1138px;top:55px" width="16" height="16" viewBox="0 0 16 16"><defs><linearGradient id="ex1" x1="0.9" y1="0.05" x2="0.2" y2="0.95"><stop offset="0" stop-color="#f2643c"/><stop offset="0.35" stop-color="#b23fd0"/><stop offset="0.65" stop-color="#4a49ee"/><stop offset="1" stop-color="#2b8cf2"/></linearGradient></defs><circle cx="8" cy="8" r="7.9" fill="url(#ex1)"/><path d="M4 6.9 L12.2 5.1 M3.8 10.9 L12 9.1" stroke="#fff" stroke-width="2" stroke-linecap="round"/></svg>
<svg class="abs" style="left:1174px;top:55px" width="16" height="16" viewBox="0 0 16 16"><path d="M8 0.4 A7.6 7.6 0 1 1 8 15.6 H0.8 V8 A7.6 7.6 0 0 1 8 0.4 Z" fill="#0e7c66"/><path d="M11.3 5.6 A4.1 4.1 0 1 0 12 8.6 H8.6" fill="none" stroke="#fff" stroke-width="1.5" stroke-linecap="round"/></svg>
<svg class="abs" style="left:1209.5px;top:55.5px" width="17" height="15" viewBox="0 0 18 16"><path d="M0.8 8 Q9 -1.4 17.2 8 Q9 17.4 0.8 8 Z" fill="#22c55e"/><path d="M3.6 8 Q6.4 4.6 9.4 4.4" fill="none" stroke="#fff" stroke-width="1.1" stroke-linecap="round"/><path d="M12.9 1 L6.3 15" stroke="#fff" stroke-width="2.2"/><path d="M11.2 1.4 L5.4 14.4" stroke="#22c55e" stroke-width="1.3" stroke-linecap="round"/></svg>
<svg class="abs" style="left:1245.8px;top:52.2px" width="18" height="18" viewBox="0 0 18 18"><path d="M2.2 6.2 Q2.2 4.8 3.6 4.8 H12.6 Q14 4.8 14 6.2 V15 Q14 16.4 12.6 16.4 H3.6 Q2.2 16.4 2.2 15 V12.6 A1.9 1.9 0 0 0 2.2 8.8 Z" fill="none" stroke="#474747" stroke-width="1.6" stroke-linejoin="round"/><path d="M5.9 4.8 A2.2 2.3 0 0 1 10.3 4.8 Z" fill="#474747" stroke="#474747" stroke-width="0.9"/><path d="M14 8.5 A2.3 2.2 0 0 1 14 12.9 Z" fill="#474747" stroke="#474747" stroke-width="0.9"/></svg>
<div class="abs" style="left:1280.3px;top:55px;width:2px;height:16px;background:#c9dbf9;border-radius:1px"></div>
<svg class="abs" style="left:1298px;top:53px" width="20" height="20" viewBox="0 0 20 20"><defs><clipPath id="avc"><circle cx="10" cy="10" r="10"/></clipPath></defs><g clip-path="url(#avc)"><rect width="20" height="20" fill="#7d7468"/><rect y="0" width="20" height="7" fill="#8f8a80"/><rect y="12" width="20" height="8" fill="#9b8e7c"/><rect x="0" y="4" width="5" height="9" fill="#5a5a4e"/><rect x="15" y="4" width="5" height="9" fill="#615e52"/><path d="M6.5 20 V12 Q6.5 9 10 9 Q13.5 9 13.5 12 V20 Z" fill="#e8e6e4"/><circle cx="10" cy="6.3" r="2.4" fill="#c9a387"/><path d="M7.6 5.6 Q10 2.2 12.4 5.6 Q10 4.4 7.6 5.6Z" fill="#2a2420"/><path d="M9.5 10 H10.5 V16 H9.5Z" fill="#8c8c94"/></g></svg>
<svg class="abs" style="left:1341px;top:54px" width="6" height="18" viewBox="0 0 6 18"><circle cx="3" cy="3.2" r="1.5" fill="#474747"/><circle cx="3" cy="9" r="1.5" fill="#474747"/><circle cx="3" cy="14.8" r="1.5" fill="#474747"/></svg>
<svg class="abs" style="left:13px;top:93px" width="14" height="14" viewBox="0 0 14 14"><g fill="none" stroke="#474747" stroke-width="1.5"><rect x="0.8" y="0.8" width="4.6" height="4.6"/><rect x="8.6" y="0.8" width="4.6" height="4.6"/><rect x="0.8" y="8.6" width="4.6" height="4.6"/><rect x="8.6" y="8.6" width="4.6" height="4.6"/></g></svg>
<div class="abs" style="left:42.3px;top:92px;width:2px;height:16px;background:#c9dbf9;border-radius:1px"></div>
<svg class="abs" style="left:58px;top:92px" width="17" height="17" viewBox="0 0 17 17"><path d="M7 4 H15.5 Q16.5 4 16.5 5 V15.5 Q16.5 16.5 15.5 16.5 H9.5 Z" fill="#dcdcdc"/><path d="M0.5 1.5 Q0.5 0.5 1.5 0.5 H8.2 L11.8 12.6 H1.5 Q0.5 12.6 0.5 11.6 Z" fill="#4285f4"/><path d="M9.4 12.6 H11.8 L9.6 16.4 Z" fill="#3367d6"/><path d="M6.6 6.4 H4.3 V7.3 H5.6 Q5.3 8.3 4.3 8.3 Q3 8.3 3 6.9 Q3 5.5 4.3 5.5 Q4.9 5.5 5.3 5.9 L5.9 5.2 Q5.2 4.6 4.3 4.6 Q2.1 4.6 2.1 6.9 Q2.1 9.2 4.3 9.2 Q6.6 9.2 6.6 6.9 Z" fill="#fff"/><path d="M10.8 7.6 H15.2 M13 6.6 V7.6 M14.4 7.6 Q13.6 10.4 11 11.8 M11.8 9 Q12.8 11 14.8 11.9" fill="none" stroke="#5f6368" stroke-width="0.9"/></svg>
<div class="abs" style="left:80px;top:92px;font-size:12.3px;line-height:16px;color:#2a2a2a;white-space:nowrap;letter-spacing:-0.336px">Google Translate</div>
<svg class="abs" style="left:185px;top:92px" width="16" height="16" viewBox="0 0 16 16"><defs><linearGradient id="av1" x1="0" y1="0" x2="0" y2="1"><stop offset="0" stop-color="#d7263d"/><stop offset="1" stop-color="#f4791f"/></linearGradient></defs><rect width="16" height="16" rx="1.5" fill="url(#av1)"/><g transform="scale(0.696 0.68)" fill="none" stroke="#fff" stroke-width="2.1" stroke-linecap="round"><path d="M10.3 8.9 A1.5 1.5 0 1 1 12 7.4 A3.4 3.4 0 0 1 8.6 11.4 A4 4 0 0 1 6.6 5.4 A4.6 4.6 0 0 1 14.4 6 Q15.6 9 15 14"/><path d="M2.6 11.6 Q6.4 18 11.6 16.8 Q15 16 17.8 14.6"/><path d="M18 3 V20.6"/></g></svg>
<div class="abs" style="left:207.2px;top:92px;font-size:12.3px;line-height:16px;color:#2a2a2a;white-space:nowrap;letter-spacing:-0.332px">avro.im</div>
<svg class="abs" style="left:262px;top:92px" width="16" height="16" viewBox="0 0 16 16"><rect width="16" height="16" rx="2" fill="#34a853"/><path d="M1.6 4.9 H14.4 V7.6 H9.35 V16 H6.65 V7.6 H1.6 Z M6.65 1.6 H9.35 V4.9 H6.65 Z" fill="#fff"/></svg>
<div class="abs" style="left:284px;top:92px;font-size:12.3px;line-height:16px;color:#2a2a2a;white-space:nowrap;letter-spacing:-0.277px">Project managemen...</div>
<svg class="abs" style="left:416px;top:92px" width="16" height="16" viewBox="0 0 16 16"><rect width="16" height="16" rx="2" fill="#34a853"/><path d="M1.6 4.9 H14.4 V7.6 H9.35 V16 H6.65 V7.6 H1.6 Z M6.65 1.6 H9.35 V4.9 H6.65 Z" fill="#fff"/></svg>
<div class="abs" style="left:438.6px;top:92px;font-size:12.3px;line-height:16px;color:#2a2a2a;white-space:nowrap;letter-spacing:-0.112px">List of Prototype &amp;...</div>
<svg class="abs" style="left:570px;top:92px" width="16" height="16" viewBox="0 0 16 16"><rect width="16" height="16" rx="2.5" fill="#1e8ed1"/><path d="M4 3.6 H12 V5.4 L6.8 10.6 H12 V12.6 H4 V10.8 L9.2 5.6 H4 Z" fill="#fff"/></svg>
<div class="abs" style="left:591.7px;top:92px;font-size:12.3px;line-height:16px;color:#2a2a2a;white-space:nowrap;letter-spacing:-0.219px">Zimbra Web Client...</div>
<svg class="abs" style="left:725px;top:94.6px" width="14" height="10.6" viewBox="0 0 16 12" preserveAspectRatio="none"><path d="M0 1.2 V11 Q0 12 1 12 H3.4 V5.2 Z" fill="#4285f4"/><path d="M16 1.2 V11 Q16 12 15 12 H12.6 V5.2 Z" fill="#34a853"/><path d="M0 1.6 Q0 0 1.6 0 L8 4.9 L14.4 0 Q16 0 16 1.6 V2.6 L8 8.7 L0 2.6 Z" fill="#ea4335"/><path d="M0 1.6 Q0 0 1.6 0 L3.4 1.4 V5.2 L0 2.6Z" fill="#c5221f"/><path d="M16 1.6 Q16 0 14.4 0 L12.6 1.4 V5.2 L16 2.6Z" fill="#fbbc04"/></svg>
<div class="abs" style="left:746.5px;top:92px;font-size:12.3px;line-height:16px;color:#2a2a2a;white-space:nowrap;letter-spacing:-0.183px">hafijmit05@gmail.c...</div>
<svg class="abs" style="left:879px;top:91.5px" width="17" height="17" viewBox="0 0 17 17"><defs><linearGradient id="cu8" x1="0" y1="0" x2="1" y2="0"><stop offset="0" stop-color="#8930fd"/><stop offset="1" stop-color="#49ccf9"/></linearGradient><linearGradient id="cv8" x1="0" y1="0" x2="1" y2="0"><stop offset="0" stop-color="#ff02f0"/><stop offset="1" stop-color="#ffc800"/></linearGradient></defs><rect x="0.25" y="0.75" width="15.5" height="15.5" rx="3.5" fill="#fff" stroke="#eef0f3" stroke-width="0.5"/><path d="M4 11.3 Q8 15 12 11.3" fill="none" stroke="url(#cu8)" stroke-width="1.9" stroke-linecap="round"/><path d="M4.2 7.8 L8 4.5 L11.8 7.8" fill="none" stroke="url(#cv8)" stroke-width="1.9" stroke-linecap="round" stroke-linejoin="round"/><circle cx="14" cy="3" r="2.3" fill="#ff0000"/></svg>
<div class="abs" style="left:900px;top:92px;font-size:12.3px;line-height:16px;color:#2a2a2a;white-space:nowrap;letter-spacing:-0.339px">ClickUp</div>
<svg class="abs" style="left:956px;top:91.5px" width="17" height="17" viewBox="0 0 17 17"><path d="M8.6 1.2 A7.1 7.1 0 1 1 5 14.5 L1.3 15.6 L2.4 12 A7.1 7.1 0 0 1 8.6 1.2 Z" fill="none" stroke="#25a55a" stroke-width="1.8" stroke-linejoin="round"/><path d="M6.1 4.9 C5.6 4.9 5.2 5.6 5.2 6.4 C5.4 8.9 8 11.5 10.5 11.8 C11.4 11.8 12.1 11.3 12.1 10.8 L10.4 9.8 L9.6 10.5 C8.5 10.1 7 8.6 6.7 7.5 L7.3 6.7 Z" fill="#25a55a"/></svg>
<div class="abs" style="left:979px;top:92px;font-size:12.3px;line-height:16px;color:#2a2a2a;white-space:nowrap;letter-spacing:-0.218px">WhatsApp</div>
<svg class="abs" style="left:1052.5px;top:93.2px" width="13.5" height="13.5" viewBox="0 0 16 16"><g fill="none" stroke="#4a4a4a" stroke-width="1.3"><ellipse cx="8" cy="8" rx="3.1" ry="6.9"/><ellipse cx="8" cy="8" rx="3.1" ry="6.9" transform="rotate(60 8 8)"/><ellipse cx="8" cy="8" rx="3.1" ry="6.9" transform="rotate(120 8 8)"/></g></svg>
<div class="abs" style="left:1073.4px;top:92px;font-size:12.3px;line-height:16px;color:#2a2a2a;white-space:nowrap;letter-spacing:-0.952px">ChatGPT</div>
<svg class="abs" style="left:1206px;top:95px" width="12" height="10" viewBox="0 0 12 10"><path d="M1.2 1 L5.2 5 L1.2 9 M6.6 1 L10.6 5 L6.6 9" fill="none" stroke="#474747" stroke-width="1.4" stroke-linecap="round" stroke-linejoin="round"/></svg>
<div class="abs" style="left:1234.3px;top:92px;width:2px;height:16px;background:#c9dbf9;border-radius:1px"></div>
<svg class="abs" style="left:1251.5px;top:93px" width="17" height="14" viewBox="0 0 17 14"><path d="M0.8 2.4 Q0.8 0.9 2.3 0.9 H6.2 L8 2.9 H14.7 Q16.2 2.9 16.2 4.4 V11.6 Q16.2 13.1 14.7 13.1 H2.3 Q0.8 13.1 0.8 11.6 Z" fill="none" stroke="#474747" stroke-width="1.5" stroke-linejoin="round"/></svg>
<div class="abs" style="left:1276.3px;top:92px;font-size:12.3px;line-height:16px;color:#2a2a2a;white-space:nowrap;letter-spacing:-0.262px">All Bookmarks</div>
<div id="taskbar" class="abs" style="left:0;top:728px;width:1366px;height:40px;background:linear-gradient(90deg,#1c2127 0px,#211f22 40px,#282220 100px,#2e2723 160px,#352d27 215px,#3a322a 280px,#3d352b 420px,#3d362b 1040px,#2d3130 1085px,#1a2a31 1135px,#16272f 1366px)"></div>
<div class="abs" style="left:0;top:728px;width:1366px;height:1px;background:rgba(0,0,0,0.25)"></div>
<svg class="abs" style="left:15.7px;top:739.8px" width="16.6" height="16.2" viewBox="0 0 17 17"><path d="M0 2.4 L7 1.4 V8 H0 Z M8 1.25 L17 0 V8 H8 Z M0 9 H7 V15.6 L0 14.6 Z M8 9 H17 V17 L8 15.75 Z" fill="#fff"/></svg>
<svg class="abs" style="left:59px;top:735px" width="26" height="26" viewBox="0 0 26 26"><circle cx="15" cy="10.8" r="7.6" fill="none" stroke="#fff" stroke-width="2.1"/><path d="M9.6 16.4 L2.6 23.6" stroke="#fff" stroke-width="2.3" stroke-linecap="round"/></svg>
<svg class="abs" style="left:111px;top:737px" width="24" height="22" viewBox="0 0 24 22"><defs>
<linearGradient id="cp2" x1="0" y1="0" x2="0" y2="1"><stop offset="0" stop-color="#1c8ff5"/><stop offset="0.3" stop-color="#22c0d8"/><stop offset="0.62" stop-color="#6fd15a"/><stop offset="1" stop-color="#fbd61c"/></linearGradient>
<linearGradient id="cp3" x1="0" y1="0" x2="0" y2="1"><stop offset="0" stop-color="#a94ff2"/><stop offset="0.5" stop-color="#f0568f"/><stop offset="1" stop-color="#ffb84a"/></linearGradient>
<linearGradient id="cp4" x1="0" y1="0" x2="1" y2="1"><stop offset="0" stop-color="#f9a62f"/><stop offset="1" stop-color="#e6402f"/></linearGradient></defs>
<path d="M10 0.8 H13.6 Q15.5 0.8 16.1 2.8 L17.5 7.8 H12.8 L11.5 2.6 Q11.1 0.8 10 0.8 Z" fill="#1d55d6"/>
<path d="M6.8 0.8 H12 Q14 0.8 13.3 3 L10.2 13.6 Q9.6 15.6 7.6 15.6 H3 Q0.6 15.6 1.3 13.2 L4.2 2.8 Q4.8 0.8 6.8 0.8 Z" fill="url(#cp2)"/>
<path d="M6 15.4 H10.2 L11 18.8 Q11.6 21.2 13.6 21.2 H10.4 Q8.4 21.2 7.8 19.2 Z" fill="url(#cp4)"/>
<path d="M16 6.4 H20.6 Q23 6.4 22.3 8.8 L19.4 19.2 Q18.8 21.2 16.8 21.2 H11.8 Q9.8 21.2 10.5 19 L13.4 8.4 Q14 6.4 16 6.4 Z" fill="url(#cp3)"/>
</svg>
<svg class="abs" style="left:160.2px;top:736px" width="23" height="23.5" viewBox="0 0 23 23.5"><defs><linearGradient id="avt" x1="0" y1="0" x2="0" y2="1"><stop offset="0" stop-color="#f7b550"/><stop offset="0.48" stop-color="#e1632b"/><stop offset="0.75" stop-color="#d83f4a"/><stop offset="1" stop-color="#d8335f"/></linearGradient></defs>
<rect width="23" height="23.5" rx="1.8" fill="url(#avt)"/>
<path d="M2.4 13.4 Q6.4 19.6 11.6 18.2 Q15 17.2 17.6 16.2" fill="none" stroke="#ffd0c4" stroke-opacity="0.55" stroke-width="0.9"/>
<path d="M10.3 8.9 A1.5 1.5 0 1 1 12 7.4 A3.4 3.4 0 0 1 8.6 11.4 A4 4 0 0 1 6.6 5.4 A4.6 4.6 0 0 1 14.4 6 Q15.6 9 15 14" fill="none" stroke="#47271a" stroke-width="1.7" stroke-linecap="round"/>
<path d="M2.6 11.6 Q6.4 18 11.6 16.8 Q15 16 17.8 14.6" fill="none" stroke="#47271a" stroke-width="1.7" stroke-linecap="round"/>
<path d="M18 2.6 V21" stroke="#47271a" stroke-width="1.6" stroke-linecap="round"/>
</svg>
<svg class="abs" style="left:208px;top:736px" width="24" height="24" viewBox="0 0 24 24"><defs><linearGradient id="np1" x1="0" y1="0" x2="1" y2="1"><stop offset="0" stop-color="#d8eef7"/><stop offset="0.5" stop-color="#8fc7dd"/><stop offset="1" stop-color="#5aa3bf"/></linearGradient></defs><path d="M20.6 4 L22.6 19.6 L20.8 21.6 L19 6 Z" fill="#c79a3e"/><path d="M9 1.5 L20.5 3.5 L17.5 22.5 L1 17 Z" fill="url(#np1)"/><path d="M16.6 6 L20.4 3.6 L17.5 22.5 L14.4 21.4 Z" fill="#eef7fb" opacity="0.9"/><path d="M9 1.5 L20.5 3.5 L20.2 5 L8.6 3 Z" fill="#b9c4ca"/></svg>
<svg class="abs" style="left:257px;top:735px" width="26" height="26" viewBox="0 0 26 26"><path d="M13.3 1.4 A11 11 0 1 1 7.8 22 L1.8 23.8 L3.7 18 A11 11 0 0 1 13.3 1.4 Z" fill="#8b9091" stroke="#fff" stroke-width="1.7" stroke-linejoin="round"/><path d="M9.4 7.2 C8.6 7.2 7.9 8.3 8 9.6 C8.4 13.6 12.4 17.5 16.3 18 C17.7 18 18.8 17.2 18.8 16.4 L16.2 14.8 L14.9 15.9 C13.2 15.3 10.9 13 10.3 11.3 L11.3 10 Z" fill="#fff"/></svg>
<svg class="abs" style="left:306px;top:736px" width="25" height="24" viewBox="0 0 25 24"><rect x="2.2" y="2" width="21.8" height="20.5" rx="2.2" fill="#f3f3f3"/><path d="M2.2 14 V20.3 Q2.2 22.5 4.4 22.5 H21.8 Q24 22.5 24 20.3 V14 Z" fill="#d9d9d9"/><path d="M12 0.8 Q5 7 1.6 14.4 Q5.6 16 8.6 15.6 Q8.2 8 12 0.8 Z" fill="#1e9a3a"/><path d="M8.2 3.4 Q17.6 8 21 16.6 Q15.6 17.6 12 21.6 Q13.2 11.6 8.2 3.4 Z" fill="#e3231b"/></svg>
<svg class="abs" style="left:356px;top:736px" width="24" height="24" viewBox="0 0 24 24"><rect width="24" height="24" rx="9.5" fill="#0b5cff"/><text x="12" y="15.8" font-family="Liberation Sans, sans-serif" font-size="13.2" fill="#fff" stroke="#fff" stroke-width="0.55" text-anchor="middle">zm</text></svg>
<svg class="abs" style="left:405.5px;top:736px" width="23" height="24" viewBox="0 0 23 24"><rect x="10" y="3.6" width="11.8" height="16.8" rx="0.8" fill="#fff" stroke="#1d7044" stroke-width="0.8"/><rect x="14.4" y="5.6" width="3.2" height="1.7" fill="#1d7044"/><rect x="18" y="5.6" width="3" height="1.7" fill="#1d7044"/><rect x="14.4" y="8.3" width="3.2" height="1.7" fill="#1d7044"/><rect x="18" y="8.3" width="3" height="1.7" fill="#1d7044"/><rect x="14.4" y="11" width="3.2" height="1.7" fill="#1d7044"/><rect x="18" y="11" width="3" height="1.7" fill="#1d7044"/><rect x="14.4" y="13.7" width="3.2" height="1.7" fill="#1d7044"/><rect x="18" y="13.7" width="3" height="1.7" fill="#1d7044"/><rect x="14.4" y="16.4" width="3.2" height="1.7" fill="#1d7044"/><rect x="18" y="16.4" width="3" height="1.7" fill="#1d7044"/><path d="M0 2.6 L13.4 0 V24 L0 21.4 Z" fill="#1d7044"/><text x="6.7" y="16.3" font-family="Liberation Sans, sans-serif" font-size="11.5" font-weight="bold" fill="#fff" text-anchor="middle">X</text></svg>
<svg class="abs" style="left:454.5px;top:736px" width="23" height="24" viewBox="0 0 23 24"><rect x="10" y="3.6" width="11.8" height="16.8" rx="0.8" fill="#fff" stroke="#2a569a" stroke-width="0.8"/><rect x="14.2" y="6" width="6.4" height="1.5" fill="#2a569a"/><rect x="14.2" y="8.6" width="6.4" height="1.5" fill="#2a569a"/><rect x="14.2" y="11.2" width="6.4" height="1.5" fill="#2a569a"/><rect x="14.2" y="13.8" width="6.4" height="1.5" fill="#2a569a"/><rect x="14.2" y="16.4" width="6.4" height="1.5" fill="#2a569a"/><path d="M0 2.6 L13.4 0 V24 L0 21.4 Z" fill="#2a569a"/><text x="6.7" y="16.3" font-family="Liberation Sans, sans-serif" font-size="11.5" font-weight="bold" fill="#fff" text-anchor="middle">W</text></svg>
<svg class="abs" style="left:503.5px;top:736px" width="23" height="24" viewBox="0 0 23 24"><rect x="10" y="3.6" width="11.8" height="16.8" rx="0.8" fill="#fff" stroke="#3a55a5" stroke-width="0.8"/><rect x="16.6" y="5.6" width="4" height="4" transform="rotate(45 18.6 7.6)" fill="none" stroke="#3a55a5" stroke-width="1"/><circle cx="16.4" cy="13" r="2.1" fill="none" stroke="#3a55a5" stroke-width="1"/><rect x="14.6" y="15.8" width="4" height="3" fill="none" stroke="#3a55a5" stroke-width="0.9"/><path d="M0 2.6 L13.4 0 V24 L0 21.4 Z" fill="#3a55a5"/><text x="6.7" y="16.3" font-family="Liberation Sans, sans-serif" font-size="11.5" font-weight="bold" fill="#fff" text-anchor="middle">V</text></svg>
<svg class="abs" style="left:552.7px;top:736.5px" width="22.2" height="22.8" viewBox="0 0 23 23" preserveAspectRatio="none"><defs><linearGradient id="sn1" x1="0" y1="0" x2="0" y2="1"><stop offset="0" stop-color="#ffd60a"/><stop offset="1" stop-color="#f9c311"/></linearGradient></defs><rect width="23" height="23" rx="1.5" fill="url(#sn1)"/><path d="M11.5 23 L23 11.5 V21.5 Q23 23 21.5 23 Z" fill="#e9a70c"/><path d="M11.5 11.5 H23 L11.5 23 Z" fill="#3d3d40"/></svg>
<svg class="abs" style="left:600.7px;top:736px" width="24.2" height="24" viewBox="0 0 25 24" preserveAspectRatio="none"><rect width="25" height="24" fill="#3e8fcb"/><rect x="0.6" y="0.6" width="23.8" height="22.8" fill="none" stroke="#2d6da3" stroke-width="1.2"/><path d="M23.6 2.4 Q16 -0.6 7 2.2 Q1 4.6 2.6 9.6 Q4 13 11.6 14.4 Q15.6 15.2 14.6 17 Q12.6 19.4 1.4 17.2 V21.8 Q10 24.6 18.6 22 Q24.4 19.6 22.8 14.4 Q21.4 11 13.6 9.6 Q9.8 8.8 10.6 7.2 Q12.6 4.8 23.6 7.2 Z" fill="#fff"/></svg>
<svg class="abs" style="left:650px;top:735px" width="24" height="25" viewBox="0 0 24 25"><defs>
<radialGradient id="ff1" cx="0.7" cy="0.15" r="1"><stop offset="0" stop-color="#fff36b"/><stop offset="0.3" stop-color="#ffbd2f"/><stop offset="0.6" stop-color="#ff6a2a"/><stop offset="0.85" stop-color="#f5276a"/><stop offset="1" stop-color="#d11f8f"/></radialGradient>
<radialGradient id="ff2" cx="0.5" cy="0.4" r="0.6"><stop offset="0" stop-color="#9a4cf5"/><stop offset="1" stop-color="#6a2bd0"/></radialGradient></defs>
<path d="M15.6 0.6 Q16.4 3.6 19.4 6 Q23.4 9.6 23.2 14 Q22.8 21.6 14.6 24 Q6 25.6 1.8 19 Q-0.6 14.4 1.6 9 Q1.8 7.4 3 5.6 Q3.2 7.4 4.2 8.2 Q5.6 5 9.2 4.2 Q8.6 6 9.6 7.2 Q12.4 4 15.6 0.6 Z" fill="url(#ff1)"/>
<circle cx="12.4" cy="14.2" r="5.6" fill="url(#ff2)"/>
<path d="M6.4 11.4 Q8 9.6 10.6 10.4 Q13 9 15 10 Q12.8 10.6 12.2 12.4 Q10.2 13.6 8.2 12.6 Q7.6 16.8 12 18.2 Q16.4 19 18.2 15 Q19 19.8 14.4 21.6 Q8.6 23 6 18.6 Q4.6 14.6 6.4 11.4 Z" fill="#ff8a1f" opacity="0.95"/></svg>
<div class="abs" style="left:687px;top:728px;width:48px;height:40px;background:#665e57"></div>
<svg class="abs" style="left:699px;top:735px" width="28" height="28" viewBox="0 0 28 28"><defs><clipPath id="tav"><circle cx="18.4" cy="19.2" r="7.3"/></clipPath></defs>
<circle cx="12" cy="12" r="11.6" fill="#fff"/>
<path d="M12 12 L1.95 6.2 A11.6 11.6 0 0 1 22.05 6.2 Z" fill="#ea4335"/>
<path d="M12 12 L22.05 6.2 A11.6 11.6 0 0 1 12 23.6 Z" fill="#fbbc04"/>
<path d="M12 12 L12 23.6 A11.6 11.6 0 0 1 1.95 6.2 Z" fill="#34a853"/>
<path d="M12 6.2 H22.05 A11.6 11.6 0 0 1 23.4 10 L17 14.9 Z" fill="#fbbc04"/>
<path d="M1.95 6.2 L7 14.9 L12 6.2 Z" fill="#ea4335"/>
<path d="M7 14.9 L12 23.6 L17 14.9 Z" fill="#34a853"/>
<circle cx="12" cy="12" r="5.8" fill="#fff"/><circle cx="12" cy="12" r="4.6" fill="#1a73e8"/>
<g clip-path="url(#tav)"><rect x="11" y="11.8" width="15" height="15" fill="#8a8478"/><rect x="11" y="11.8" width="15" height="6" fill="#b9b7b0"/><rect x="11" y="14" width="4" height="6" fill="#4f5546"/><rect x="22" y="14" width="4" height="6" fill="#565a4c"/><path d="M15.4 27 V20 Q15.4 17.6 18.4 17.6 Q21.4 17.6 21.4 20 V27 Z" fill="#ebe9e7"/><circle cx="18.4" cy="15.6" r="1.9" fill="#c9a387"/><path d="M16.5 15.2 Q18.4 12.4 20.3 15.2 Q18.4 14.2 16.5 15.2Z" fill="#241f1c"/><path d="M18 18.4 H18.8 V24 H18Z" fill="#8c8c94"/></g></svg>
<svg class="abs" style="left:748px;top:736px" width="24" height="24" viewBox="0 0 24 24"><rect width="24" height="24" fill="#ef443b"/><path d="M9 7.2 L13.8 12 L9 16.8 L4.2 12 Z" fill="#fff"/><path d="M12.4 7.2 H14.6 L19.4 12 L14.6 16.8 H12.4 L17.2 12 Z" fill="#fff"/></svg>
<div class="abs" style="left:544px;top:766px;width:40px;height:2px;background:#76b9ed"></div>
<div class="abs" style="left:593px;top:766px;width:40px;height:2px;background:#76b9ed"></div>
<div class="abs" style="left:642px;top:766px;width:40px;height:2px;background:#76b9ed"></div>
<div class="abs" style="left:687px;top:766px;width:48px;height:2px;background:#76b9ed"></div>
<svg class="abs" style="left:1158px;top:743px" width="13" height="9" viewBox="0 0 13 9"><path d="M1 7.6 L6.5 1.6 L12 7.6" fill="none" stroke="#fff" stroke-width="1.3"/></svg>
<svg class="abs" style="left:1180px;top:740px" width="18" height="16" viewBox="0 0 18 16"><path d="M1 5.6 H3.6 L7 2.2 V13.8 L3.6 10.4 H1 Z" fill="none" stroke="#fff" stroke-width="1.1" stroke-linejoin="round"/><path d="M9.4 5.6 Q10.8 8 9.4 10.4 M11.6 3.8 Q14 8 11.6 12.2 M13.8 2 Q17.2 8 13.8 14" fill="none" stroke="#fff" stroke-width="1.1" stroke-linecap="round"/></svg>
<svg class="abs" style="left:1207px;top:740px" width="15" height="15" viewBox="0 0 15 15"><g fill="none" stroke="#d8dcdd" stroke-width="1.1" stroke-linecap="round"><path d="M1.6 13.4 A11.4 11.4 0 0 1 13 2"/><path d="M5 13.4 A8 8 0 0 1 13 5.4"/><path d="M8.4 13.4 A4.6 4.6 0 0 1 13 8.8"/></g><circle cx="12.2" cy="12.6" r="1.5" fill="#fff"/></svg>
<svg class="abs" style="left:1231px;top:739px" width="13" height="18" viewBox="0 0 13 18"><g fill="none" stroke="#fff" stroke-width="1.1" stroke-linecap="round" stroke-linejoin="round"><path d="M2.4 3 Q6 0.4 9.6 3"/><path d="M2.4 15 Q6 17.6 9.6 15"/><rect x="1" y="5.4" width="7.6" height="7.2" rx="1.8"/><path d="M8.6 8 L12 6.2 V11.8 L8.6 10"/></g></svg>
<div class="abs" style="left:1241px;top:732px;width:80px;text-align:center;font-size:11.7px;line-height:14px;color:#fff;white-space:nowrap;letter-spacing:-0.2px">3:34 PM</div>
<div class="abs" style="left:1241px;top:750px;width:80px;text-align:center;font-size:11.7px;line-height:14px;color:#fff;white-space:nowrap;letter-spacing:-0.1px">2/10/2026</div>
<svg class="abs" style="left:1325px;top:740px" width="24" height="24" viewBox="0 0 24 24"><path d="M0.4 0.6 H15.8 V11.4 H6.6 L3.4 14.6 V11.4 H0.4 Z" fill="#fff"/><path d="M3 3.6 H13.2 M3 6 H13.2 M3 8.4 H13.2" stroke="#1a2a31" stroke-width="1"/><circle cx="15.8" cy="15.5" r="7.3" fill="#23282c" stroke="#4a5156" stroke-width="0.9"/><text x="15.8" y="19.3" font-family="Liberation Sans, sans-serif" font-size="10.5" font-weight="bold" fill="#fff" text-anchor="middle">2</text></svg>
<div class="abs" style="left:1361px;top:728px;width:1px;height:40px;background:#5c676c"></div>
<svg class="abs" style="left:900px;top:190px;width:400px;height:460px;overflow:visible" width="400" height="460" viewBox="900 190 400 460">
<defs><filter id="sh" x="-30%" y="-30%" width="170%" height="170%"><feGaussianBlur in="SourceAlpha" stdDeviation="2"/><feOffset dx="3" dy="3"/><feComponentTransfer><feFuncA type="linear" slope="0.6"/></feComponentTransfer><feMerge><feMergeNode/><feMergeNode in="SourceGraphic"/></feMerge></filter></defs>
<rect x="919.5" y="204.5" width="124" height="29" fill="#ffffd9" stroke="#7d7d7d" stroke-width="1" filter="url(#sh)"/>
<text x="980" y="223.7" font-family="Liberation Sans, sans-serif" font-size="14.5" fill="#000" text-anchor="middle">371,100 asbe</text>
<g filter="url(#sh)"><path d="M1224.8 613.9 L1238 627 L1236.3 608.4 Z" fill="#ff0000"/></g>
<line x1="1043" y1="218" x2="1230.8" y2="611.8" stroke="#ee1c1c" stroke-width="1.1"/>
<circle cx="1043.2" cy="218" r="4.8" fill="#ff0000" stroke="#c40000" stroke-width="0.6"/>
</svg>
</body></html>
